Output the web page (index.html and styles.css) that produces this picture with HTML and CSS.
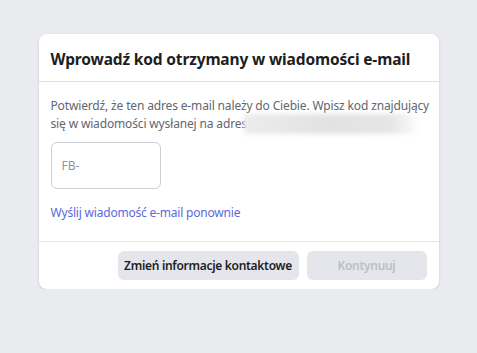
FILE: index.html
```html
<!doctype html>
<html lang="pl">
  <head>
    <meta charset="UTF-8" />
    <meta name="viewport" content="width=device-width, initial-scale=1.0" />
    <title>Wprowadź kod</title>
    <link rel="stylesheet" href="styles.css">
  </head>
  <body>
    <div class="card">
      <div class="card-header">
        <h2>Wprowadź kod otrzymany w wiadomości e-mail</h2>
      </div>

      <div class="card-body">
        <p class="desc">
          Potwierdź, że ten adres e-mail należy do Ciebie. Wpisz kod znajdujący<br />
          się w wiadomości wysłanej na adres<span class="blurred"></span>
        </p>
        <input class="code-input" type="text" placeholder="FB-" />
        <a class="resend" href="#">Wyślij wiadomość e-mail ponownie</a>
      </div>

      <div class="card-footer">
        <button class="btn btn-secondary">Zmień informacje kontaktowe</button>
        <button class="btn btn-primary" disabled>Kontynuuj</button>
      </div>
    </div>
  </body>
</html>
```
FILE: styles.css
```css
body {
  font-family: "Noto Sans", sans-serif;
  margin: 0;
  padding-top: 34px;
  background: #e9ebee;
  color: #1c1e21;
}

.card {
  width: 400px;
  margin: 0 auto;
  background: white;
  border-radius: 8px;
  box-shadow: 0 1px 3px rgba(0, 0, 0, 0.12);
}

.card-header {
  height: 47px;
  padding: 0 12px;
  display: flex;
  align-items: center;
  border-bottom: 1px solid #dadde1;
}

.card-header h2 {
  margin: 3px 0 0;
  font-size: 15.5px;
  letter-spacing: -0.15px;
  font-weight: bold;
  color: #1c1e21;
}

.card-body {
  padding: 15px 12px 20px;
}

.desc {
  margin: 0;
  font-size: 12px;
  letter-spacing: -0.15px;
  line-height: 17px;
  white-space: nowrap;
  color: #606770;
}

.blurred {
  display: inline-block;
  width: 172px;
  height: 20px;
  margin-left: -3px;
  vertical-align: -6px;
  background: linear-gradient(90deg, #ececec, #e2e2e2 50%, #e6e6e6 85%, #fafafa);
  filter: blur(2px);
}

.code-input {
  display: block;
  box-sizing: border-box;
  width: 110px;
  height: 47px;
  margin-top: 8px;
  padding: 0 10px;
  border: 1px solid #ccd0d5;
  border-radius: 6px;
  font-family: inherit;
  font-size: 12px;
  outline: none;
}

.code-input::placeholder {
  color: #90949c;
}

.resend {
  display: block;
  margin-top: 15px;
  font-size: 12px;
  letter-spacing: -0.2px;
  line-height: 17px;
  color: #5a6adb;
  text-decoration: none;
}

.card-footer {
  display: flex;
  justify-content: flex-end;
  gap: 8px;
  padding: 9px 12px;
  border-top: 1px solid #e4e6eb;
}

.btn {
  height: 29px;
  padding: 0;
  border: none;
  border-radius: 6px;
  background: #e4e6eb;
  font-family: inherit;
  font-size: 12px;
  font-weight: 600;
  letter-spacing: -0.3px;
  color: #1c1e21;
  cursor: pointer;
}

.btn-secondary {
  width: 181px;
}

.btn-primary {
  width: 120px;
}

.btn:disabled {
  color: #bcc0c4;
  cursor: default;
}
```
